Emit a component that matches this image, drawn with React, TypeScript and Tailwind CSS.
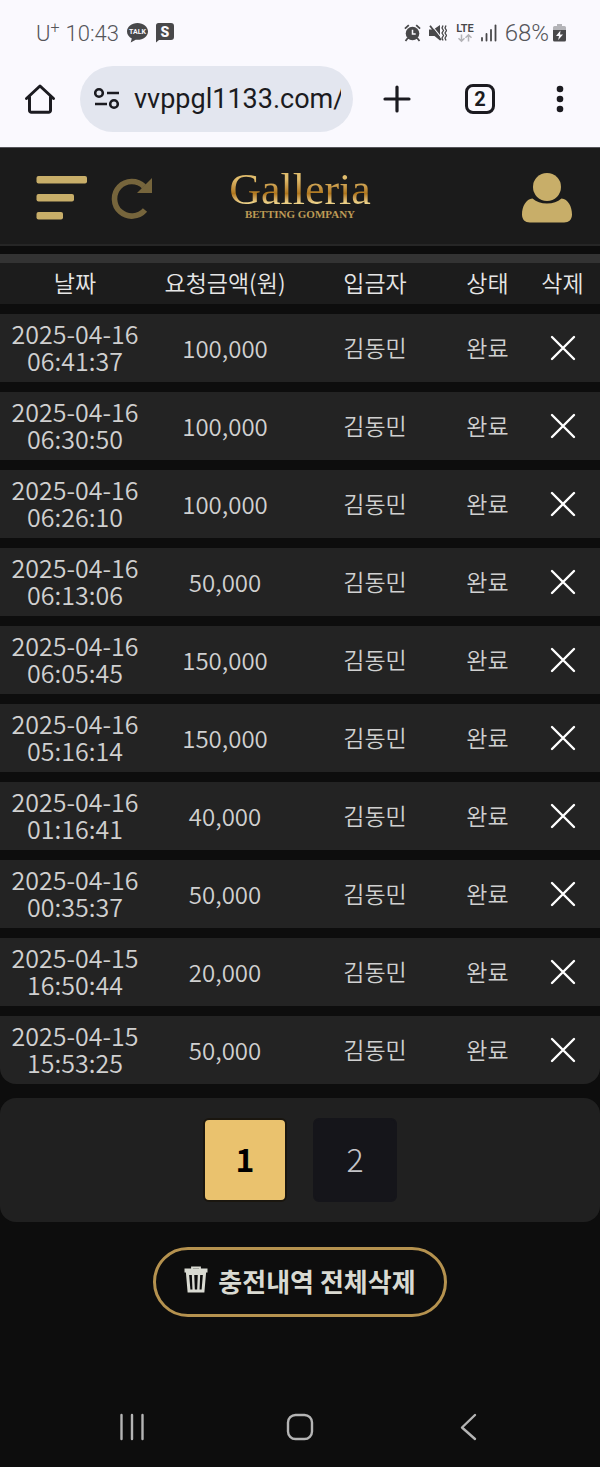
import { useState } from 'react';

type Deposit = {
  date: string;
  time: string;
  amount: string;
  name: string;
  status: string;
};

const initialDeposits: Deposit[] = [
  { date: '2025-04-16', time: '06:41:37', amount: '100,000', name: '김동민', status: '완료' },
  { date: '2025-04-16', time: '06:30:50', amount: '100,000', name: '김동민', status: '완료' },
  { date: '2025-04-16', time: '06:26:10', amount: '100,000', name: '김동민', status: '완료' },
  { date: '2025-04-16', time: '06:13:06', amount: '50,000', name: '김동민', status: '완료' },
  { date: '2025-04-16', time: '06:05:45', amount: '150,000', name: '김동민', status: '완료' },
  { date: '2025-04-16', time: '05:16:14', amount: '150,000', name: '김동민', status: '완료' },
  { date: '2025-04-16', time: '01:16:41', amount: '40,000', name: '김동민', status: '완료' },
  { date: '2025-04-16', time: '00:35:37', amount: '50,000', name: '김동민', status: '완료' },
  { date: '2025-04-15', time: '16:50:44', amount: '20,000', name: '김동민', status: '완료' },
  { date: '2025-04-15', time: '15:53:25', amount: '50,000', name: '김동민', status: '완료' },
];

function StatusBar() {
  return (
    <div className="flex h-[66px] items-center justify-between pl-9 pr-[34px] text-[22px] text-[#55555a]">
      <div className="flex items-center font-light">
        <span>
          U<sup className="text-[16px]">+</sup>
        </span>
        <span className="ml-1.5">10:43</span>
        <svg width="21" height="20" viewBox="0 0 21 20" className="ml-2" fill="#48484a">
          <path d="M10.500 0C4.700 0 0 3.800 0 8.400c0 3 1.900 5.600 4.800 7.100L3.700 19.500l5-2.800c.6.1 1.200.1 1.800.1 5.800 0 10.500-3.800 10.500-8.400S16.300 0 10.500 0z" />
          <text x="10.500" y="11" textAnchor="middle" fontSize="7" fontWeight="700" fill="#faf9fe" fontFamily="Roboto, sans-serif">TALK</text>
        </svg>
        <svg width="18" height="20" viewBox="0 0 18 20" className="ml-2" fill="#48484a">
          <path d="M2.500 0h12.500a3 3 0 0 1 3 3v11a3 3 0 0 1-3 3H3L0 19.500V2.500A2.500 2.500 0 0 1 2.500 0z" />
          <text x="9" y="13.500" textAnchor="middle" fontSize="14" fontWeight="900" fill="#faf9fe" fontFamily="Roboto, sans-serif">S</text>
        </svg>
      </div>
      <div className="flex items-center">
        <svg width="17" height="18" viewBox="0 0 17 18" fill="#48484a">
          <path d="M4.200 0.500 0.300 4l1.200 1.300L5.400 1.800zM12.800.5l3.900 3.500-1.200 1.300-3.900-3.500z" />
          <circle cx="8.500" cy="9.500" r="6.800" />
          <path d="M3.800 14 1.500 17M13.200 14l2.300 3" stroke="#48484a" strokeWidth="1.800" />
          <path d="M8.500 5.800v4.200h3.200" fill="none" stroke="#faf9fe" strokeWidth="1.500" />
        </svg>
        <svg width="18" height="18" viewBox="0 0 18 18" className="ml-2" fill="#48484a">
          <path d="M0 5.500h4.500L11 1v15.500L5.500 12H0z" />
          <path d="M2 0.500 13.500 15" stroke="#faf9fe" strokeWidth="1.200" />
          <path d="M1 1.800 12 16" stroke="#48484a" strokeWidth="1.800" />
          <path d="M14 1.500l-1 2.500 1.500 2.500-1.500 2.500 1.500 2.500-1.500 2.500 1 2.500M17 1.500l-1 2.500 1.500 2.500-1.500 2.500 1.500 2.500-1.500 2.500 1 2.500" fill="none" stroke="#48484a" strokeWidth="1.300" />
        </svg>
        <svg width="20" height="20" viewBox="0 0 20 20" className="ml-2">
          <text x="10" y="9" textAnchor="middle" fontSize="11" fontWeight="600" fill="#48484a" fontFamily="Roboto, sans-serif">LTE</text>
          <path d="M6.500 11.500v6.500M3.500 15.300l3 3 3-3M13.500 18.500v-6.500M10.500 14.700l3-3 3 3" fill="none" stroke="#b4b4b8" strokeWidth="1.500" />
        </svg>
        <svg width="16" height="18" viewBox="0 0 16 18" className="ml-1.5" fill="none" stroke="#48484a" strokeWidth="1.800" strokeLinecap="round">
          <path d="M1 14v2.500M5.500 10v6.500M10 6v10.500" />
          <path d="M14.500 1.500v15" />
        </svg>
        <span className="ml-2 text-[24px] font-light">68%</span>
        <svg width="13" height="18" viewBox="0 0 13 18" className="ml-1">
          <path d="M4 0h5v2h2.500a1.500 1.500 0 0 1 1.500 1.500V8H0V3.500A1.500 1.500 0 0 1 1.500 2H4z" fill="#b4b4b8" />
          <path d="M0 6h13v10a1.500 1.500 0 0 1-1.500 1.500h-10A1.500 1.500 0 0 1 0 16z" fill="#48484a" />
          <path d="M7.500 6.500 3 12h3l-.8 4L10 10.500H7z" fill="#faf9fe" />
        </svg>
      </div>
    </div>
  );
}

function BrowserBar() {
  return (
    <div className="flex items-center pb-[15px] pl-6 pr-[29px] text-[#1b1b20]">
      <button aria-label="Home">
        <svg width="32" height="32" viewBox="0 0 32 32" fill="none" stroke="currentColor" strokeWidth="3" strokeLinecap="round" strokeLinejoin="round">
          <path d="M2.500 15.500 16 3l13.500 12.500" />
          <path d="M5.500 14v13.500a1.800 1.800 0 0 0 1.800 1.800h17.400a1.800 1.800 0 0 0 1.800-1.800V14" />
        </svg>
      </button>
      <div className="ml-6 flex h-[66px] min-w-0 flex-1 items-center rounded-full bg-[#e3e6ef] pl-3.5 pr-3">
        <svg width="26" height="24" viewBox="0 0 26 24" className="shrink-0" fill="none" stroke="currentColor" strokeWidth="2.600">
          <circle cx="5" cy="6" r="3.800" />
          <path d="M13 6h12M1 17h12" />
          <circle cx="20" cy="17" r="3.800" />
        </svg>
        <input
          type="text"
          aria-label="Address"
          defaultValue="vvppgl1133.com/"
          className="ml-3.5 w-full min-w-0 bg-transparent text-[27px] outline-none"
        />
      </div>
      <button aria-label="New tab" className="ml-[30px]">
        <svg width="28" height="28" viewBox="0 0 28 28" fill="none" stroke="currentColor" strokeWidth="3.200" strokeLinecap="round">
          <path d="M14 2v24M2 14h24" />
        </svg>
      </button>
      <button aria-label="Tabs" className="ml-[54px] flex size-[30px] items-center justify-center rounded-lg border-3 border-[#1b1b20] text-[20px] font-bold leading-none">
        2
      </button>
      <button aria-label="More" className="ml-[58px] mr-1">
        <svg width="14" height="28" viewBox="0 0 14 28" fill="currentColor">
          <circle cx="7" cy="4" r="3.300" />
          <circle cx="7" cy="14" r="3.300" />
          <circle cx="7" cy="24" r="3.300" />
        </svg>
      </button>
    </div>
  );
}

function SiteHeader() {
  return (
    <header className="grid h-[99px] grid-cols-3 items-center border-b-2 border-t border-b-[#262626] border-t-[#55555a] bg-[#1b1b1b] px-7 pt-1">
      <div className="flex items-center gap-6 pl-2">
        <button aria-label="Menu">
          <svg width="51" height="44" viewBox="0 0 51 44" fill="#c8ae69">
            <rect x="0.500" y="0" width="50.500" height="7.500" rx="2" />
            <rect x="0.500" y="18" width="37.500" height="7.500" rx="2" />
            <rect x="0.500" y="36" width="26.500" height="7.500" rx="2" />
          </svg>
        </button>
        <button aria-label="Refresh">
          <svg width="42" height="42" viewBox="0 0 42 42">
            <path d="M34 33A17.300 17.300 0 1 1 33 9.500" fill="none" stroke="#76653c" strokeWidth="5.600" />
            <path d="M41 1v15H26z" fill="#76653c" />
          </svg>
        </button>
      </div>
      <a href="#" className="flex flex-col items-center pb-1 font-['Liberation_Serif',serif]">
        <span className="bg-linear-to-b from-[#e0bc6c] from-20% via-[#b0771c] via-60% to-[#ecd087] to-85% bg-clip-text text-[44px] leading-9 text-transparent">
          Galleria
        </span>
        <span className="whitespace-nowrap text-[11px] font-bold leading-3 text-[#bd9a55]">BETTING GOMPANY</span>
      </a>
      <button aria-label="My page" className="justify-self-end">
        <svg width="50" height="50" viewBox="0 0 50 50" fill="#c8ae69">
          <circle cx="25" cy="14" r="14" />
          <path d="M10.500 25.500C4 26 0 33.500 0 41.500c0 5 3 8 8 8h34c5 0 8-3 8-8 0-8-4-15.500-10.500-16-4 3.300-8.500 5-14.500 5s-10.500-1.700-14.500-5z" />
        </svg>
      </button>
    </header>
  );
}

export default function App() {
  const [deposits, setDeposits] = useState(initialDeposits);
  const [page, setPage] = useState(1);

  const removeDeposit = (index: number) => {
    setDeposits(deposits.filter((_, i) => i !== index));
  };

  const pageClass = (n: number) =>
    n === page
      ? 'border-[#1a160f] bg-[#eac26e] font-bold text-black'
      : 'border-[#15151a] bg-[#15151a] font-light text-[#c4c4c8]';

  return (
    <div className="flex min-h-screen flex-col bg-[#0d0d0d] font-['Noto_Sans_CJK_KR',sans-serif]">
      <div className="bg-[#faf9fe] font-[Roboto,sans-serif]">
        <StatusBar />
        <BrowserBar />
      </div>
      <SiteHeader />

      <main className="mt-2 flex flex-col">
        <div className="h-[9px] bg-[#333333]" />
        <div className="overflow-hidden rounded-b-2xl">
          <table className="w-full table-fixed border-separate border-spacing-0 text-center text-[23px] font-[350] leading-[27px] text-[#d0d0d0]">
            <thead className="bg-[#1c1c1c] text-[#e6e6e6]">
              <tr className="h-[41px] *:p-0 *:pb-0.5 *:font-[350]">
                <th className="w-1/4">날짜</th>
                <th className="w-1/4">요청금액(원)</th>
                <th className="w-1/4">입금자</th>
                <th className="w-1/8">상태</th>
                <th className="w-1/8">삭제</th>
              </tr>
            </thead>
            <tbody>
              {deposits.map((item, i) => (
                <tr key={i} className="h-[78px] *:border-t-10 *:border-[#0d0d0d] *:bg-[#232323] *:p-0 *:pb-0.5">
                  <td className="text-[25px]">
                    {item.date}
                    <br />
                    {item.time}
                  </td>
                  <td className="text-[24px]">{item.amount}</td>
                  <td>{item.name}</td>
                  <td>{item.status}</td>
                  <td>
                    <button aria-label="삭제" onClick={() => removeDeposit(i)} className="block w-full pt-0.5">
                      <svg width="26" height="26" viewBox="0 0 26 26" className="mx-auto" fill="none" stroke="#ffffff" strokeWidth="2.400" strokeLinecap="round">
                        <path d="M2 2l22 22M24 2 2 24" />
                      </svg>
                    </button>
                  </td>
                </tr>
              ))}
            </tbody>
          </table>
        </div>

        <nav className="mt-3.5 flex justify-center gap-[26px] rounded-2xl bg-[#202020] py-5">
          {[1, 2].map((n) => (
            <button
              key={n}
              onClick={() => setPage(n)}
              className={`size-[84px] rounded-md border-2 pb-1 text-[32px] ${pageClass(n)}`}
            >
              {n}
            </button>
          ))}
        </nav>

        <button
          onClick={() => setDeposits([])}
          className="mt-[25px] flex h-[70px] items-center gap-2.5 self-center rounded-full border-3 border-[#b5924f] px-7 text-[26px] font-bold text-[#d9dad2]"
        >
          <svg width="24" height="28" viewBox="0 0 24 28" className="mb-1" fill="none" stroke="currentColor">
            <path d="M8 3V1.500h8V3" strokeWidth="1.800" />
            <path d="M0.500 4.500h23" strokeWidth="4" />
            <path d="M3.500 7.500 5 25h14l1.500-17.500z" strokeWidth="3" />
            <path d="M9 8l.7 17M15 8l-.7 17" strokeWidth="2.400" />
          </svg>
          <span className="pb-1">충전내역 전체삭제</span>
        </button>
      </main>

      <footer className="mt-auto grid h-20 grid-cols-3 items-center justify-items-center px-12">
        <button aria-label="Recent apps">
          <svg width="26" height="28" viewBox="0 0 26 28" fill="none" stroke="#b4b4b4" strokeWidth="2.400" strokeLinecap="round">
            <path d="M2.500 2v24M13 2v24M23.500 2v24" />
          </svg>
        </button>
        <button aria-label="Home screen">
          <svg width="28" height="28" viewBox="0 0 28 28" fill="none" stroke="#b4b4b4" strokeWidth="2.400">
            <rect x="2" y="2" width="24" height="24" rx="7.500" />
          </svg>
        </button>
        <button aria-label="Back">
          <svg width="18" height="28" viewBox="0 0 18 28" fill="none" stroke="#b4b4b4" strokeWidth="2.400" strokeLinecap="round" strokeLinejoin="round">
            <path d="M16 2 3 14.500 16 26" />
          </svg>
        </button>
      </footer>
    </div>
  );
}
